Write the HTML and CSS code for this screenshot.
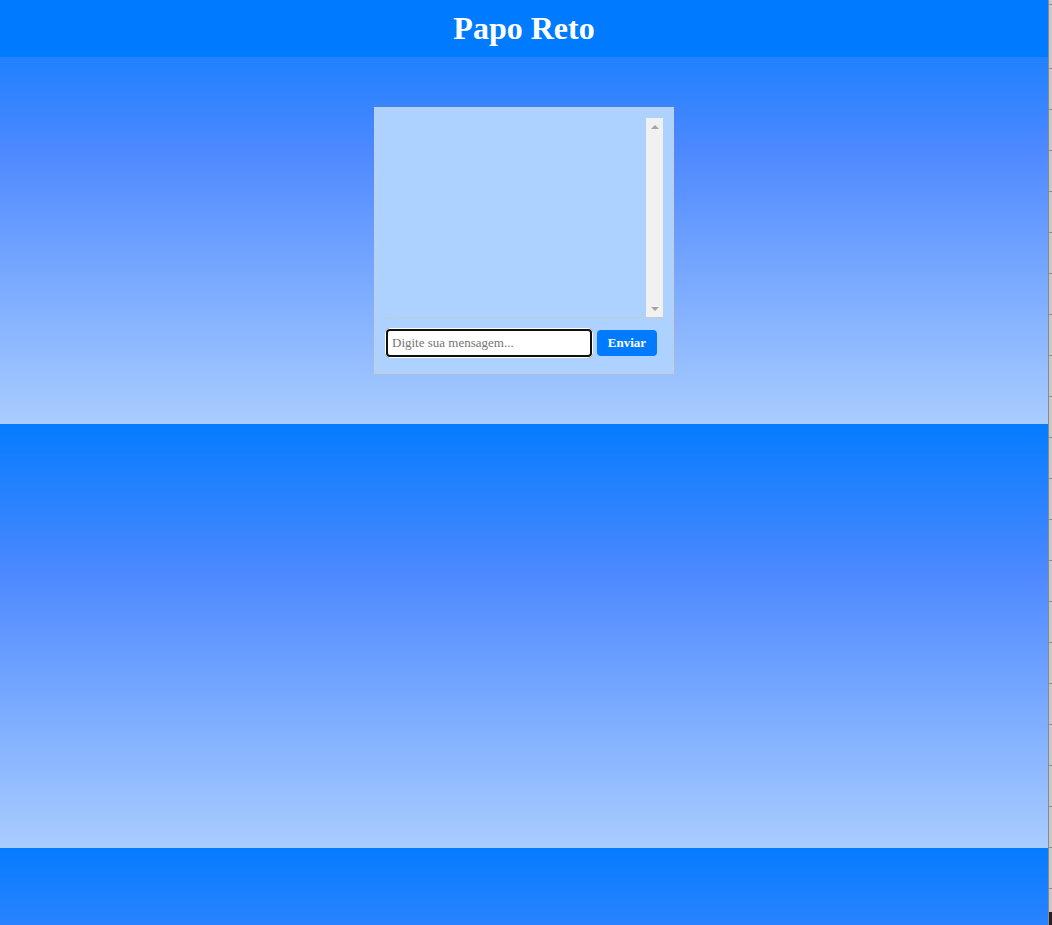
FILE: index.html
```html
<!DOCTYPE html>
<html lang="pt-BR">
<head>
<meta charset="utf-8">
<title>Papo Reto</title>
<link rel="stylesheet" href="styles.css">
</head>
<body>
<header class="site-header">
  <h1 class="site-title">Papo Reto</h1>
</header>
<main class="chat-box">
  <div class="messages">
    <div class="messages-list"></div>
    <div class="scrollbar">
      <span class="arrow arrow-up"></span>
      <span class="arrow arrow-down"></span>
    </div>
  </div>
  <form class="composer">
    <input class="message-input" type="text" placeholder="Digite sua mensagem...">
    <button class="send-button" type="button">Enviar</button>
  </form>
</main>
<div class="edge-strip"></div>
</body>
</html>
```

FILE: styles.css
```css
body {
  margin: 0 4px 0 0;
  font-family: "Liberation Serif", "Times New Roman", serif;
  background: linear-gradient(to bottom, #057cff 0%, #4e89ff 36%, #aacdff 100%);
}

.site-header {
  background: #007bff;
  height: 57px;
  display: flex;
  align-items: center;
  justify-content: center;
}

.site-title {
  margin: 0;
  color: #ffffff;
  font-size: 32px;
  font-weight: bold;
  line-height: 37px;
}

.chat-box {
  width: 300px;
  box-sizing: border-box;
  margin: 50px auto;
  padding: 10px;
  border: 1px solid #cccccc;
  background: #add2ff;
}

.messages {
  height: 199px;
  border-bottom: 1px solid #c9c9c9;
  display: flex;
}

.messages-list {
  flex: 1;
}

.scrollbar {
  width: 17px;
  background: #f1f1f1;
  display: flex;
  flex-direction: column;
  justify-content: space-between;
  align-items: center;
  padding: 7px 0 6px;
  box-sizing: border-box;
}

.arrow {
  width: 0;
  height: 0;
  border-left: 4px solid transparent;
  border-right: 4px solid transparent;
}

.arrow-up {
  border-bottom: 4px solid #a3a3a3;
}

.arrow-down {
  border-top: 4px solid #a3a3a3;
}

.composer {
  display: flex;
  align-items: center;
  gap: 4px;
  margin: 10px 0 5px;
}

.message-input {
  width: 208px;
  height: 30px;
  box-sizing: border-box;
  border: none;
  border-radius: 5px;
  background: #ffffff;
  box-shadow: inset 0 0 0 1px #ffffff, inset 0 0 0 3px #101010;
  padding: 0 7px;
  font-family: "Liberation Serif", "Times New Roman", serif;
  font-size: 13px;
  color: #222222;
  outline: none;
}

.message-input::placeholder {
  color: #757575;
}

.send-button {
  width: 60px;
  height: 26px;
  border: none;
  border-radius: 4px;
  background: #007bff;
  color: #ffffff;
  font-family: "Liberation Serif", "Times New Roman", serif;
  font-size: 13px;
  font-weight: bold;
  padding: 0;
}

.edge-strip {
  position: fixed;
  top: 0;
  right: 0;
  width: 3px;
  height: 100%;
  border-left: 1px solid #8a8a8a;
  background: repeating-linear-gradient(to bottom, #c9c9c9 0, #c9c9c9 40px, #8f8f8f 40px, #8f8f8f 41px);
  background-position: 0 28px;
}

.edge-strip::after {
  content: "";
  position: absolute;
  left: 0;
  right: 0;
  bottom: 0;
  height: 13px;
  background: #242424;
}
```
